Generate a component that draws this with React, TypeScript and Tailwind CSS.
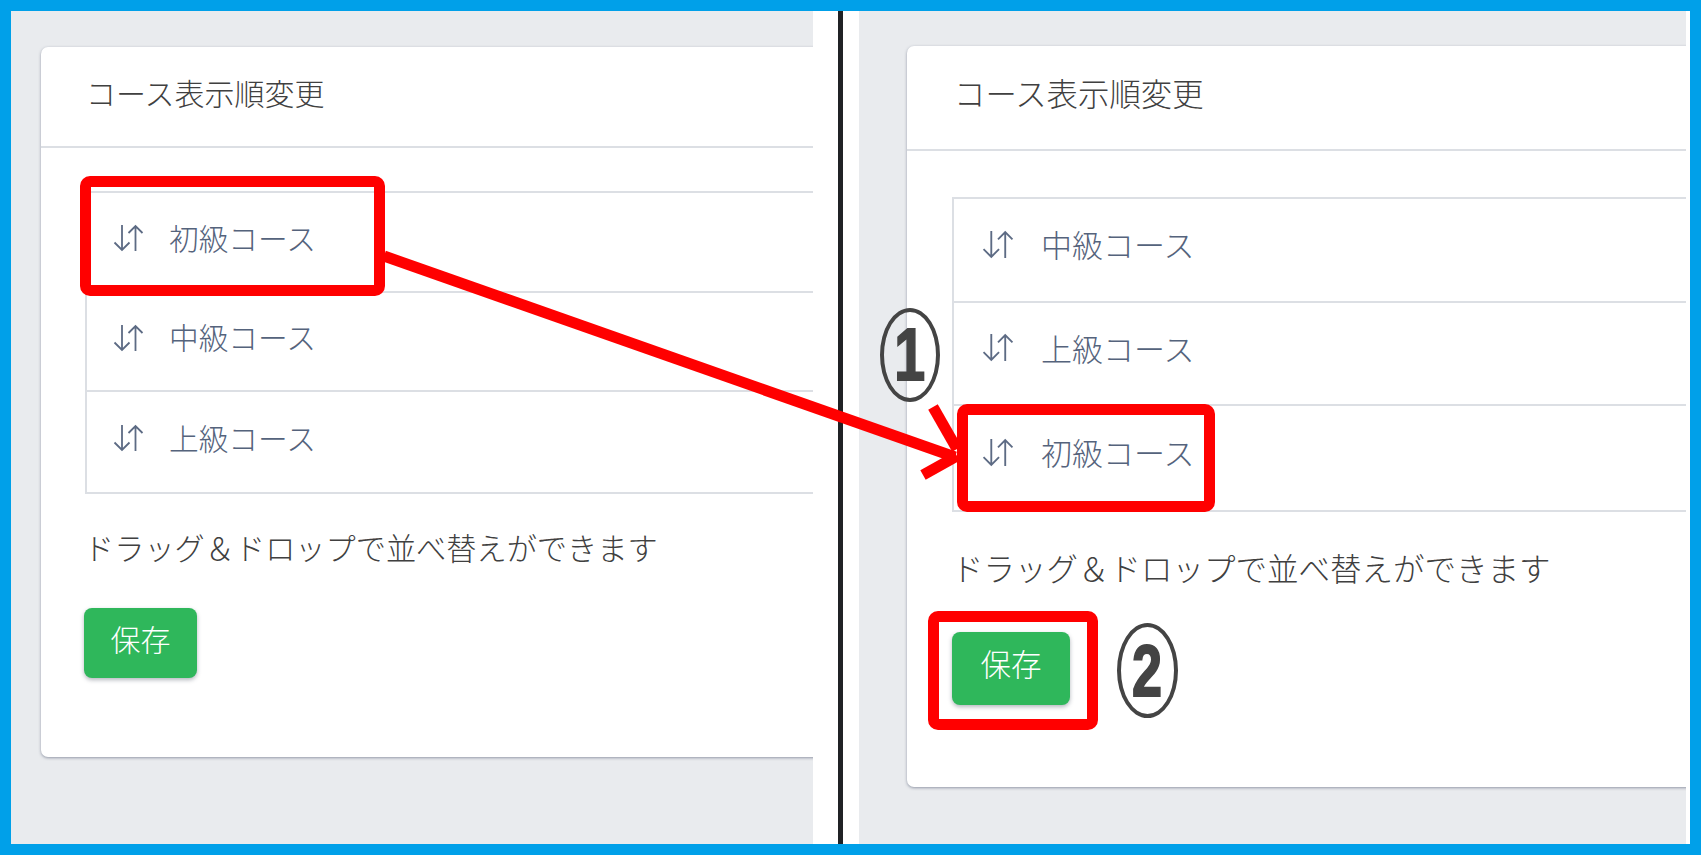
const FONT = "font-['Noto_Sans_CJK_JP','Noto_Sans',sans-serif]";

function SortIcon({ className }: { className: string }) {
  return (
    <svg viewBox="0 0 31 28" fill="none" stroke="#5d6b84" strokeWidth="1.8" className={className}>
      <path d="M9 1V26M1.5 18.5L9 26L16.5 18.5" />
      <path d="M22.5 27V2M15.5 9L22.5 2L29.5 9" />
    </svg>
  );
}

function LeftRow({ label, last }: { label: string; last?: boolean }) {
  return (
    <div className={`flex items-center h-[99.5px] pl-[26px] pb-[7px] gap-[25px] text-[29.7px] font-light text-[#55637c] ${last ? "" : "border-b-2 border-[#dcdfe4]"}`}>
      <SortIcon className="w-[31px] h-[28px] shrink-0" />
      <span>{label}</span>
    </div>
  );
}

function RightRow({ label, last }: { label: string; last?: boolean }) {
  return (
    <div className={`flex items-center h-[103.5px] pl-[28px] pb-[11px] gap-[27px] text-[31px] font-light text-[#55637c] ${last ? "" : "border-b-2 border-[#dcdfe4]"}`}>
      <SortIcon className="w-[32px] h-[29px] shrink-0" />
      <span>{label}</span>
    </div>
  );
}

function Mark({ className, digit, digitClass }: { className: string; digit: string; digitClass: string }) {
  return (
    <div className={`absolute flex items-center justify-center rounded-[50%] border-[4px] border-[#444444] ${className}`}>
      <span className={`font-['Liberation_Sans',sans-serif] font-bold text-[#444444] scale-x-75 [-webkit-text-stroke:2px_#444444] ${digitClass}`}>{digit}</span>
    </div>
  );
}

export default function App() {
  return (
    <div className={`relative w-[1701px] h-[855px] overflow-hidden border-[11px] border-[#00a0e9] bg-white ${FONT}`}>
      <div className="flex h-full">
        {/* left panel */}
        <div className="w-[802px] h-full shrink-0 overflow-hidden bg-[#e9ebee] pl-[30px] pt-[36px]">
          <div className="w-[1000px] h-[710px] bg-white rounded-[7px] shadow-[0_1px_3px_rgba(60,70,95,0.5)]">
            <div className="flex items-center h-[101px] pl-[45px] pb-[8px] border-b-2 border-[#dcdfe4] text-[30px] font-light text-[#404040]">
              コース表示順変更
            </div>
            <div className="pl-[44px] pt-[43px]">
              <div className="border-2 border-[#dcdfe4] border-r-0">
                <LeftRow label="初級コース" />
                <LeftRow label="中級コース" />
                <LeftRow label="上級コース" last />
              </div>
              <p className="mt-[33px] -ml-[1px] h-[40px] leading-[40px] text-[30.2px] font-light text-[#404040]">ドラッグ＆ドロップで並べ替えができます</p>
              <button className="mt-[41px] -ml-[1px] w-[113px] h-[70px] pb-[8px] rounded-[8px] bg-[#2fb75b] text-white text-[30px] font-light shadow-[0_2px_4px_rgba(40,50,70,0.35)]">保存</button>
            </div>
          </div>
        </div>

        {/* divider */}
        <div className="w-[25px] shrink-0" />
        <div className="w-[5px] shrink-0 bg-[#202225]" />
        <div className="w-[16px] shrink-0" />

        {/* right panel */}
        <div className="w-[827px] h-full shrink-0 overflow-hidden bg-[#e9ebee] pl-[48px] pt-[35px]">
          <div className="w-[1000px] h-[741px] bg-white rounded-[7px] shadow-[0_1px_3px_rgba(60,70,95,0.5)]">
            <div className="flex items-center h-[105px] pl-[47px] pb-[10px] border-b-2 border-[#dcdfe4] text-[31.4px] font-light text-[#404040]">
              コース表示順変更
            </div>
            <div className="pl-[45px] pt-[46px]">
              <div className="border-2 border-[#dcdfe4] border-r-0">
                <RightRow label="中級コース" />
                <RightRow label="上級コース" />
                <RightRow label="初級コース" last />
              </div>
              <p className="mt-[34px] h-[42px] leading-[42px] text-[31.5px] font-light text-[#404040]">ドラッグ＆ドロップで並べ替えができます</p>
              <button className="mt-[44px] w-[118px] h-[73px] pb-[9px] rounded-[8px] bg-[#2fb75b] text-white text-[30.5px] font-light shadow-[0_2px_4px_rgba(40,50,70,0.35)]">保存</button>
            </div>
          </div>
        </div>
      </div>

      {/* annotations: coordinates relative to the inner box (image minus 11px) */}
      <div className="absolute left-[69px] top-[165px] w-[305px] h-[120px] border-[11px] border-[#ff0000] rounded-[10px]" />
      <div className="absolute left-[946px] top-[393px] w-[258px] h-[108px] border-[11px] border-[#ff0000] rounded-[10px]" />
      <div className="absolute left-[917px] top-[600px] w-[170px] h-[119px] border-[11px] border-[#ff0000] rounded-[10px]" />

      <svg className="absolute left-[-11px] top-[-11px] w-[1701px] h-[855px] pointer-events-none" viewBox="0 0 1701 855" fill="none">
        <path d="M384 256L955 457" stroke="#ff0000" strokeWidth="11" />
        <path d="M933 407L957 449" stroke="#ff0000" strokeWidth="11" />
        <path d="M923 475L957 456" stroke="#ff0000" strokeWidth="11" />
      </svg>

      <Mark className="left-[869px] top-[297px] w-[60px] h-[94px]" digit="1" digitClass="text-[74px] leading-none" />
      <Mark className="left-[1106px] top-[612px] w-[61px] h-[95px]" digit="2" digitClass="text-[72px] leading-none" />
    </div>
  );
}
